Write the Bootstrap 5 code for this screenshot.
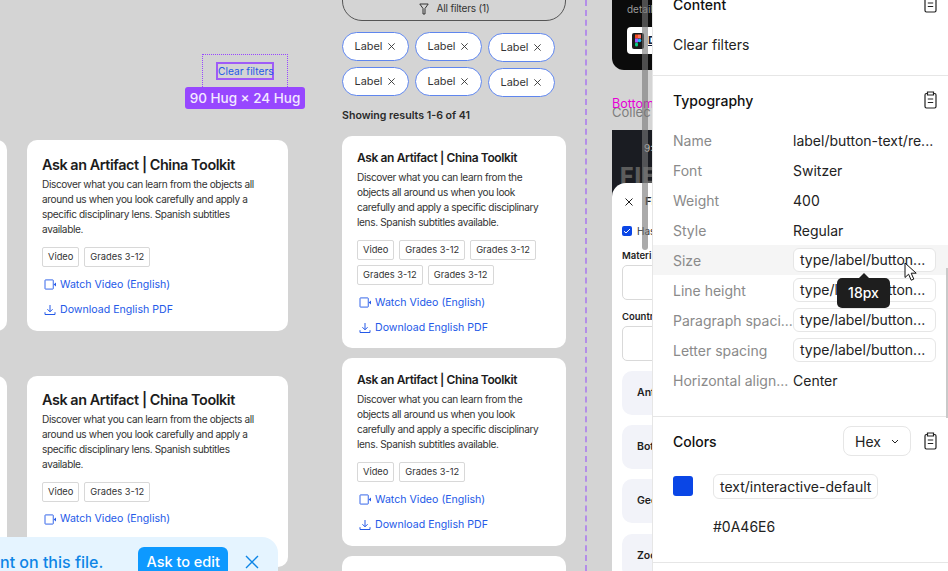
<!DOCTYPE html>
<html lang="en">
<head>
  <meta charset="UTF-8" />
  <meta name="viewport" content="width=device-width, initial-scale=1.0" />
  <title>Resource cards spec</title>
  <link href="https://cdn.jsdelivr.net/npm/bootstrap@5.3.0/dist/css/bootstrap.min.css" rel="stylesheet" />
  <style>
    html, body { margin: 0; height: 100%; overflow: hidden; }
    body { background: #d4d4d4; font-family: Inter, sans-serif; color: #1e1e1e; }
    .artboard { width: 948px; height: 571px; background: #d4d4d4; }
    .artboard svg { display: block; flex: none; }

    /* free canvas frames */
    .col-wide { left: 27px; top: 140px; width: 261px; }
    .col-stub { left: -240px; top: 140px; width: 247px; }
    .col-narrow { left: 342px; top: -20px; width: 224px; }
    .guide-line { left: 585px; top: 0; height: 571px; border-left: 2px dashed #b48ee8; }

    /* resource cards */
    .res-card { border: 0; border-radius: 10px; background: #fff; }
    .res-card .card-body { padding: 16px 15px 0; }
    .res-title { font-size: 14.4px; font-weight: 600; line-height: 18px; letter-spacing: -.43px; color: #1c1c1c; margin: 0 0 3px; }
    .col-narrow .res-title { font-size: 12px; letter-spacing: -.38px; }
    .res-text { font-size: 10.1px; letter-spacing: -.37px; line-height: 15px; color: #333; margin: 0 0 10px; }
    .res-tag { height: 20px; padding: 0 5px; border: 1px solid #d8d8d8; border-radius: 2px; font-size: 9.3px; line-height: 18px; color: #333; }
    .res-link { height: 25px; font-size: 10.6px; color: #2459e8; text-decoration: none; padding-left: 2px; }
    .res-link svg { margin-right: 3px; }
    .res-link svg.dl-icon { margin-right: 4px; }
    .card-wide-a { height: 191px; margin-bottom: 44.5px; }
    .card-wide-b { height: 191px; }
    .card-wide-b .card-body { padding-top: 15px; }
    .card-narrow-a { height: 212px; margin-bottom: 10px; }
    .card-narrow-b { height: 188px; margin-bottom: 10px; }
    .card-narrow-c { height: 60px; }
    .col-narrow .card-body { padding-top: 13px; }
    .tag-gap { gap: 5px; }
    .link-stack { margin-top: 5px; }

    /* filters */
    .filter-btn { height: 41px; width: 224px; padding: 16px 0 0; border: 1px solid #555; border-radius: 20px; background: transparent; font-size: 10.1px; letter-spacing: -.2px; color: #333; gap: 8px; }
    .chip-wrap { gap: 5px 6px; margin-top: 11px; }
    .chip { width: 67px; height: 29px; border: 1px solid #5f86ee; border-radius: 15px; background: #fff; font-size: 10.9px; color: #333; gap: 5px; }
    .chip-low { margin-top: 1px; }
    .result-count { font-size: 10.6px; font-weight: 600; line-height: 14px; color: #2a2a2a; margin: 12px 0 13px; }

    /* inspector overlay */
    .hug-box { left: 202px; top: 54px; width: 86px; height: 33px; border-style: dotted; border-color: #9747ff; border-width: 1.5px 1.5px 0 1.5px; }
    .hug-select { left: 216px; top: 62px; width: 58px; height: 18px; border: 2px solid #9f5cf7; font-size: 10.2px; line-height: 15px; color: #2459e8; text-align: center; white-space: nowrap; }
    .hug-size { left: 185px; top: 87px; width: 120px; height: 22px; background: #9747ff; border-radius: 3px; color: #f3e9ff; font-size: 13.5px; font-weight: 500; line-height: 22px; text-align: center; white-space: nowrap; }

    /* comment toast */
    .edit-toast { left: 0; top: 537px; width: 278px; height: 40px; background: #e5f4ff; border-radius: 0 16px 0 0; color: #0d85e6; font-size: 16px; font-weight: 500; padding-right: 17px; gap: 35px; }
    .edit-toast .btn { height: 30px; width: 90px; margin-top: 10px; padding: 0; border: 0; border-radius: 6px; background: #0d99ff; color: #fff; font-size: 14.5px; font-weight: 500; }
    .toast-msg { margin-top: 13px; white-space: nowrap; }
    .toast-close { margin: 18px 2px 0 -18px; }

    /* prototype behind the panel */
    .proto-dark { left: 612px; top: -20px; width: 60px; height: 90px; background: #0b0b0b; border-radius: 0 0 0 12px; color: #9a9a9a; font-size: 10px; padding: 22px 0 0 15px; }
    .proto-btn { width: 60px; height: 27px; margin-top: 10px; background: #fff; border-radius: 4px; padding-left: 5px; gap: 4px; color: #14203a; font-size: 11px; font-weight: 700; }
    .proto-magenta { left: 612px; top: 96px; color: #e600d6; font-size: 12.5px; line-height: 16px; }
    .proto-gray { left: 612px; top: 104px; color: #7d7d7d; font-size: 13px; line-height: 16px; }
    .proto-phone { left: 612px; top: 130px; width: 60px; height: 70px; background: #1a1c22; color: #ccc; }
    .proto-time { left: 32px; top: 11px; font-size: 10px; }
    .proto-logo { left: 8px; top: 34px; font-size: 23px; font-weight: 800; line-height: 24px; color: #5c5c5c; letter-spacing: 1px; }
    .proto-sheet { left: 612px; top: 183px; width: 60px; height: 400px; background: #fff; border-radius: 14px 0 0 0; padding: 10px 0 0 10px; }
    .sheet-title { height: 17px; gap: 11px; font-size: 11px; font-weight: 600; }
    .sheet-title svg { margin-left: 2px; }
    .sheet-check { margin-top: 15px; margin-bottom: 13px; gap: 5px; font-size: 10px; height: 12px; color: #333; }
    .check-box { width: 10px; height: 10px; background: #0a46e6; border-radius: 2px; }
    .sheet-label { font-size: 9.5px; font-weight: 600; line-height: 12px; white-space: nowrap; }
    .sheet-input { width: 60px; height: 35px; border: 1px solid #d9d9d9; border-radius: 5px; margin: 3px 0 11px; }
    .sheet-input + .sheet-item { margin-top: -1px; }
    .sheet-item { width: 60px; height: 44px; background: #f2f3f9; border-radius: 10px; margin-bottom: 10.2px; padding-left: 15px; font-size: 10.5px; font-weight: 600; line-height: 44px; }
    .scroll-thumb { left: 642px; top: -10px; width: 6px; height: 260px; border-radius: 3px; background: rgba(120, 120, 120, .62); }

    /* design panel */
    .spec-panel { left: 652px; top: -11px; width: 296px; height: 600px; background: #fff; border-left: 1px solid #e6e6e6; font-size: 14px; }
    .spec-section { border-bottom: 1px solid #e6e6e6; }
    .spec-section + .spec-section .spec-head { margin-top: 9px; }
    .spec-head { height: 30px; padding: 0 11px 0 20px; font-weight: 500; color: #111; }
    .spec-row { height: 30px; padding: 0 12px 0 20px; color: #222; white-space: nowrap; }
    .spec-row.hovered { background: #f5f5f5; }
    .spec-first { margin-top: 10px; }
    .spec-last { margin-bottom: 21px; }
    .clear-row { margin-bottom: 16px; }
    .spec-label { width: 120px; color: #8a8a8a; flex: none; }
    .spec-field { width: 143px; height: 24px; line-height: 22px; padding: 0 6px; border: 1px solid #e6e6e6; border-radius: 6px; background: #fff; }
    .hex-select { width: 68px; height: 30px; padding: 0 11px; border: 1px solid #e6e6e6; border-radius: 8px; background: #fff; font-size: 14px; color: #222; margin-right: 13px; }
    .swatch { width: 20px; height: 20px; background: #0a46e6; border-radius: 3px; margin-right: 20px; }
    .token-row { margin-top: 15px; }
    .token-name { height: 25px; line-height: 23px; padding: 0 6px; border: 1px solid #e6e6e6; border-radius: 6px; color: #222; }
    .hex-value { height: 30px; padding-left: 60px; color: #222; margin: 10px 0 21px; }
    .px-tip { left: 837px; top: 278px; width: 53px; height: 30px; background: #1e1e1e; border-radius: 5px; color: #fff; font-size: 14px; font-weight: 500; line-height: 30px; text-align: center; }
    .px-tip::before { content: ""; position: absolute; left: 22px; top: -5px; border: 5px solid transparent; border-top: 0; border-bottom-color: #1e1e1e; }
    .pointer { left: 904px; top: 262px; }
    .panel-scroll { left: 946px; top: 268px; width: 2px; height: 150px; background: #c9c9c9; }
  </style>
</head>
<body>
  <svg width="0" height="0" class="position-absolute">
    <symbol id="i-video" viewBox="0 0 14 12"><path d="M1.5 1h8a.5.5 0 0 1 .5.5v9a.5.5 0 0 1-.5.5h-8a.5.5 0 0 1-.5-.5v-9a.5.5 0 0 1 .5-.5z" fill="none" stroke="currentColor" stroke-width="1"/><path d="M10.5 6 13 3.8v4.4z" fill="currentColor"/></symbol>
    <symbol id="i-down" viewBox="0 0 12 12"><path d="M6 1v6.6M3.4 5.2 6 7.8l2.6-2.6M1 8.2v2.3h10V8.2" fill="none" stroke="currentColor" stroke-width="1"/></symbol>
    <symbol id="i-x" viewBox="0 0 10 10"><path d="M1.5 1.5l7 7M8.5 1.5l-7 7" fill="none" stroke="currentColor" stroke-width="1"/></symbol>
    <symbol id="i-clip" viewBox="0 0 13 18"><path d="M3.5 2.5H2.4A1.4 1.4 0 0 0 1 3.9v11.7A1.4 1.4 0 0 0 2.4 17h8.2a1.4 1.4 0 0 0 1.4-1.4V3.9a1.4 1.4 0 0 0-1.4-1.4H9.5M3.5 1h6v3h-6zM3.8 8h5.4M3.8 11.5h5.4" fill="none" stroke="#222" stroke-width="1.2"/></symbol>
    <symbol id="i-funnel" viewBox="0 0 10 12"><path d="M.8 1h8.4L6 5.5V11H4V5.5z" fill="none" stroke="#333" stroke-width="1"/></symbol>
  </svg>

  <div class="artboard position-relative overflow-hidden">

    <!-- left column, cut off card -->
    <div class="col-stub position-absolute">
      <div class="card res-card card-wide-a"></div>
      <div class="card res-card card-wide-b"></div>
    </div>

    <!-- desktop cards -->
    <div class="col-wide position-absolute">
      <div class="card res-card card-wide-a">
        <div class="card-body">
          <h5 class="res-title">Ask an Artifact | China Toolkit</h5>
          <p class="res-text">Discover what you can learn from the objects all around us when you look carefully and apply a specific disciplinary lens. Spanish subtitles available.</p>
          <div class="d-flex flex-wrap tag-gap"><span class="res-tag">Video</span><span class="res-tag">Grades 3-12</span></div>
          <div class="link-stack">
            <a href="#" class="res-link d-flex align-items-center"><svg width="13" height="11"><use href="#i-video"/></svg>Watch Video (English)</a>
            <a href="#" class="res-link d-flex align-items-center"><svg class="dl-icon" width="12" height="12"><use href="#i-down"/></svg>Download English PDF</a>
          </div>
        </div>
      </div>
      <div class="card res-card card-wide-b">
        <div class="card-body">
          <h5 class="res-title">Ask an Artifact | China Toolkit</h5>
          <p class="res-text">Discover what you can learn from the objects all around us when you look carefully and apply a specific disciplinary lens. Spanish subtitles available.</p>
          <div class="d-flex flex-wrap tag-gap"><span class="res-tag">Video</span><span class="res-tag">Grades 3-12</span></div>
          <div class="link-stack">
            <a href="#" class="res-link d-flex align-items-center"><svg width="13" height="11"><use href="#i-video"/></svg>Watch Video (English)</a>
          </div>
        </div>
      </div>
    </div>

    <!-- mobile column -->
    <div class="col-narrow position-absolute">
      <button type="button" class="filter-btn d-flex justify-content-center align-items-center"><svg width="10" height="12"><use href="#i-funnel"/></svg>All filters (1)</button>
      <div class="d-flex flex-wrap align-items-start chip-wrap">
        <span class="chip d-flex align-items-center justify-content-center">Label<svg width="9" height="9"><use href="#i-x"/></svg></span>
        <span class="chip d-flex align-items-center justify-content-center">Label<svg width="9" height="9"><use href="#i-x"/></svg></span>
        <span class="chip chip-low d-flex align-items-center justify-content-center">Label<svg width="9" height="9"><use href="#i-x"/></svg></span>
        <span class="chip d-flex align-items-center justify-content-center">Label<svg width="9" height="9"><use href="#i-x"/></svg></span>
        <span class="chip d-flex align-items-center justify-content-center">Label<svg width="9" height="9"><use href="#i-x"/></svg></span>
        <span class="chip chip-low d-flex align-items-center justify-content-center">Label<svg width="9" height="9"><use href="#i-x"/></svg></span>
      </div>
      <p class="result-count">Showing results 1-6 of 41</p>
      <div class="card res-card card-narrow-a">
        <div class="card-body">
          <h5 class="res-title">Ask an Artifact | China Toolkit</h5>
          <p class="res-text">Discover what you can learn from the objects all around us when you look carefully and apply a specific disciplinary lens. Spanish subtitles available.</p>
          <div class="d-flex flex-wrap tag-gap"><span class="res-tag">Video</span><span class="res-tag">Grades 3-12</span><span class="res-tag">Grades 3-12</span><span class="res-tag">Grades 3-12</span><span class="res-tag">Grades 3-12</span></div>
          <div class="link-stack">
            <a href="#" class="res-link d-flex align-items-center"><svg width="13" height="11"><use href="#i-video"/></svg>Watch Video (English)</a>
            <a href="#" class="res-link d-flex align-items-center"><svg class="dl-icon" width="12" height="12"><use href="#i-down"/></svg>Download English PDF</a>
          </div>
        </div>
      </div>
      <div class="card res-card card-narrow-b">
        <div class="card-body">
          <h5 class="res-title">Ask an Artifact | China Toolkit</h5>
          <p class="res-text">Discover what you can learn from the objects all around us when you look carefully and apply a specific disciplinary lens. Spanish subtitles available.</p>
          <div class="d-flex flex-wrap tag-gap"><span class="res-tag">Video</span><span class="res-tag">Grades 3-12</span></div>
          <div class="link-stack">
            <a href="#" class="res-link d-flex align-items-center"><svg width="13" height="11"><use href="#i-video"/></svg>Watch Video (English)</a>
            <a href="#" class="res-link d-flex align-items-center"><svg class="dl-icon" width="12" height="12"><use href="#i-down"/></svg>Download English PDF</a>
          </div>
        </div>
      </div>
      <div class="card res-card card-narrow-c"></div>
    </div>

    <div class="guide-line position-absolute"></div>

    <!-- selection overlay on the canvas -->
    <div class="hug-box position-absolute"></div>
    <div class="hug-select position-absolute">Clear filters</div>
    <div class="hug-size position-absolute">90 Hug × 24 Hug</div>

    <!-- prototype frames behind the panel -->
    <div class="proto-dark position-absolute">
      <div>details</div>
      <div class="proto-btn d-flex align-items-center">
        <svg width="12" height="16" viewBox="0 0 12 16"><rect width="12" height="16" rx="2" fill="#1b1b1b"/><rect x="3" y="1.5" width="3" height="4" fill="#f24e1e"/><rect x="6" y="1.5" width="3" height="4" fill="#ff7262"/><rect x="3" y="5.5" width="3" height="4" fill="#a259ff"/><circle cx="7.5" cy="7.5" r="1.8" fill="#1abcfe"/><rect x="3" y="9.5" width="3" height="4" rx="1.5" fill="#0acf83"/></svg>
        <span class="text-decoration-underline">D</span>
      </div>
    </div>
    <div class="proto-gray position-absolute">Collec</div>
    <div class="proto-magenta position-absolute">Bottom</div>
    <div class="proto-phone position-absolute">
      <span class="proto-time position-absolute">9:</span>
      <span class="proto-logo position-absolute">FIE</span>
    </div>
    <div class="proto-sheet position-absolute overflow-hidden">
      <div class="sheet-title d-flex align-items-center"><svg width="10" height="10"><use href="#i-x"/></svg><span>Fi</span></div>
      <div class="sheet-check d-flex align-items-center">
        <span class="check-box d-flex align-items-center justify-content-center"><svg width="8" height="8" viewBox="0 0 8 8"><path d="M1 4.2 3 6l4-4" fill="none" stroke="#fff" stroke-width="1"/></svg></span>Has
      </div>
      <div class="sheet-label">Materi</div>
      <div class="sheet-input"></div>
      <div class="sheet-label">Countr</div>
      <div class="sheet-input"></div>
      <div class="sheet-item">Ant</div>
      <div class="sheet-item">Bot</div>
      <div class="sheet-item">Geo</div>
      <div class="sheet-item">Zoo</div>
    </div>
    <div class="scroll-thumb position-absolute"></div>

    <!-- design panel -->
    <div class="spec-panel position-absolute">
      <section class="spec-section">
        <div class="spec-head d-flex justify-content-between align-items-center">Content<svg width="13" height="18"><use href="#i-clip"/></svg></div>
        <div class="spec-row spec-first clear-row d-flex align-items-center">Clear filters</div>
      </section>
      <section class="spec-section">
        <div class="spec-head d-flex justify-content-between align-items-center">Typography<svg width="13" height="18"><use href="#i-clip"/></svg></div>
        <div class="spec-row spec-first d-flex align-items-center"><span class="spec-label">Name</span>label/button-text/re...</div>
        <div class="spec-row d-flex align-items-center"><span class="spec-label">Font</span>Switzer</div>
        <div class="spec-row d-flex align-items-center"><span class="spec-label">Weight</span>400</div>
        <div class="spec-row d-flex align-items-center"><span class="spec-label">Style</span>Regular</div>
        <div class="spec-row hovered d-flex align-items-center"><span class="spec-label">Size</span><span class="spec-field">type/label/button...</span></div>
        <div class="spec-row d-flex align-items-center"><span class="spec-label">Line height</span><span class="spec-field">type/label/button...</span></div>
        <div class="spec-row d-flex align-items-center"><span class="spec-label">Paragraph spaci...</span><span class="spec-field">type/label/button...</span></div>
        <div class="spec-row d-flex align-items-center"><span class="spec-label">Letter spacing</span><span class="spec-field">type/label/button...</span></div>
        <div class="spec-row spec-last d-flex align-items-center"><span class="spec-label">Horizontal align...</span>Center</div>
      </section>
      <section class="spec-section">
        <div class="spec-head d-flex align-items-center">
          <span class="me-auto">Colors</span>
          <button type="button" class="hex-select d-flex align-items-center justify-content-between">Hex<svg width="8" height="5" viewBox="0 0 8 5"><path d="M1 1l3 3 3-3" fill="none" stroke="#222" stroke-width="1"/></svg></button>
          <svg width="13" height="18"><use href="#i-clip"/></svg>
        </div>
        <div class="spec-row token-row d-flex align-items-center"><span class="swatch"></span><span class="token-name">text/interactive-default</span></div>
        <div class="hex-value d-flex align-items-center">#0A46E6</div>
      </section>
    </div>

    <div class="panel-scroll position-absolute"></div>
    <div class="px-tip position-absolute">18px</div>
    <svg class="pointer position-absolute" width="14" height="20" viewBox="0 0 14 20"><path d="M1 1v14.5l3.6-3.3 2.6 6 2.6-1.1-2.6-5.9h5z" fill="#fff" stroke="#111" stroke-width="1"/></svg>

    <!-- toast -->
    <div class="edit-toast position-absolute d-flex justify-content-end">
      <span class="toast-msg">nt on this file.</span>
      <button type="button" class="btn">Ask to edit</button>
      <svg class="toast-close" width="14" height="14" viewBox="0 0 14 14"><path d="M1 1l12 12M13 1 1 13" fill="none" stroke="#0d85e6" stroke-width="1.4"/></svg>
    </div>
  </div>

  <script src="https://cdn.jsdelivr.net/npm/bootstrap@5.3.0/dist/js/bootstrap.bundle.min.js"></script>
</body>
</html>
